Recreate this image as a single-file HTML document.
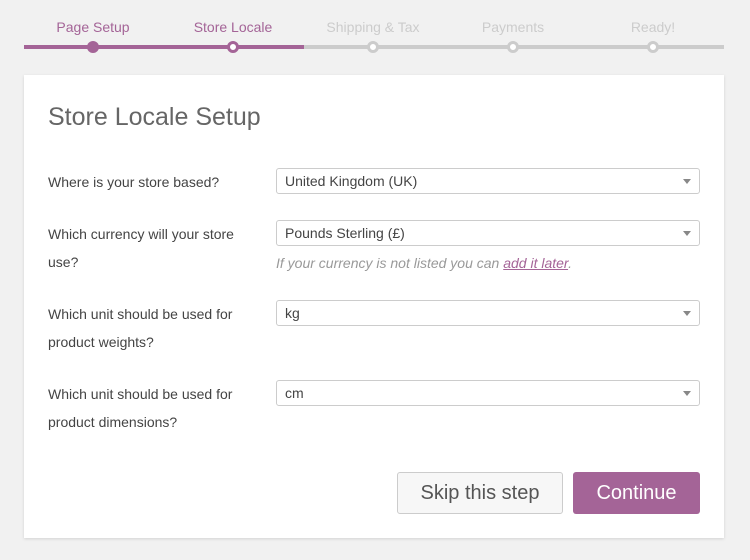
<!DOCTYPE html>
<html><head><style>
body{margin:0;width:750px;height:560px;background:#f1f1f1;font-family:"Liberation Sans",sans-serif;position:relative;overflow:hidden}
.lbl{position:absolute;top:19px;width:140px;text-align:center;font-size:14px;color:#ccc}
.lbl.a{color:#a46497}
.line{position:absolute;top:45px;height:4px}
.dot{position:absolute;top:41px;width:12px;height:12px;border-radius:50%;box-sizing:border-box}
.card{position:absolute;left:24px;top:75px;width:700px;height:463px;background:#fff;box-shadow:0 1px 3px rgba(0,0,0,.13)}
h1{position:absolute;left:48px;top:103px;margin:0;font-weight:normal;font-size:25px;color:#666}
.q{position:absolute;left:48px;font-size:14px;color:#444;line-height:28px;width:215px}
.sel{position:absolute;left:276px;width:424px;height:26px;box-sizing:border-box;border:1px solid #ccc;border-radius:3px;font-size:14px;color:#444;line-height:25px;padding-left:8px}
.sel:after{content:"";position:absolute;right:8px;top:10px;border-left:4px solid transparent;border-right:4px solid transparent;border-top:5px solid #888}
.btn{position:absolute;top:472px;height:42px;box-sizing:border-box;border-radius:3px;font-size:20px;line-height:42px;text-align:center}
</style></head><body>
<div class="lbl a" style="left:23px">Page Setup</div>
<div class="lbl a" style="left:163px">Store Locale</div>
<div class="lbl" style="left:303px">Shipping &amp; Tax</div>
<div class="lbl" style="left:443px">Payments</div>
<div class="lbl" style="left:583px">Ready!</div>
<div class="line" style="left:24px;width:280px;background:#a46497"></div>
<div class="line" style="left:304px;width:420px;background:#ccc"></div>
<div class="dot" style="left:87px;background:#a46497"></div>
<div class="dot" style="left:227px;background:#fff;border:3px solid #a46497"></div>
<div class="dot" style="left:367px;background:#fff;border:3px solid #ccc"></div>
<div class="dot" style="left:507px;background:#fff;border:3px solid #ccc"></div>
<div class="dot" style="left:647px;background:#fff;border:3px solid #ccc"></div>
<div class="card"></div>
<h1>Store Locale Setup</h1>
<div class="q" style="top:168px">Where is your store based?</div>
<div class="sel" style="top:168px">United Kingdom (UK)</div>
<div class="q" style="top:220px">Which currency will your store use?</div>
<div class="sel" style="top:220px">Pounds Sterling (£)</div>
<div style="position:absolute;left:276px;top:255px;font-size:14px;font-style:italic;color:#999">If your currency is not listed you can <span style="color:#a46497;text-decoration:underline">add it later</span>.</div>
<div class="q" style="top:300px">Which unit should be used for product weights?</div>
<div class="sel" style="top:300px">kg</div>
<div class="q" style="top:380px">Which unit should be used for product dimensions?</div>
<div class="sel" style="top:380px">cm</div>
<div class="btn" style="left:397px;width:166px;background:#f7f7f7;border:1px solid #ccc;color:#555;line-height:40px">Skip this step</div>
<div class="btn" style="left:573px;width:127px;background:#a46497;color:#fff">Continue</div>
</body></html>
